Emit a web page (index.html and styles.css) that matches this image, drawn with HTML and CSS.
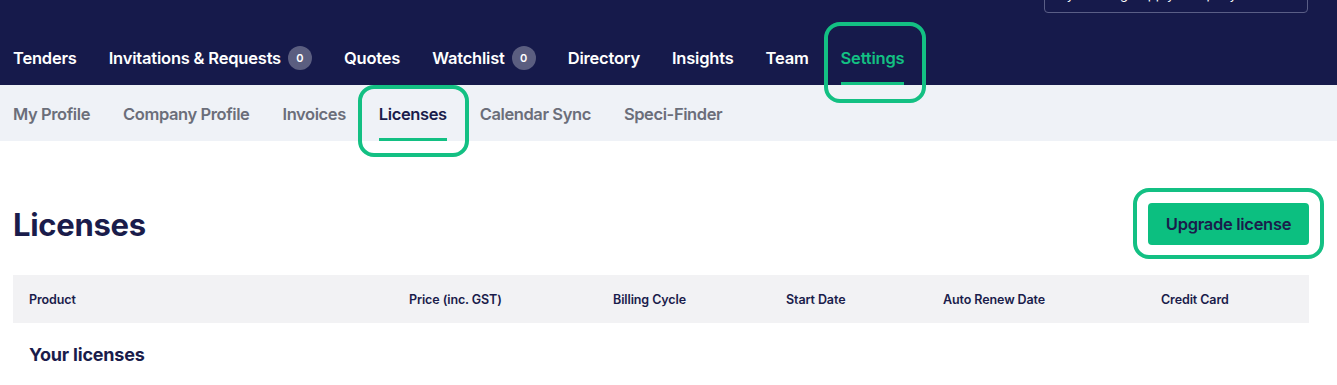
FILE: index.html
```html
<!DOCTYPE html>
<html lang="en">
  <head>
    <meta charset="UTF-8" />
    <title>Licenses</title>
    <link rel="stylesheet" href="styles.css">
  </head>
  <body>
    <header class="topbar">
      <div class="account-row">
        <div class="account">My Flooring Supply Company</div>
      </div>
      <nav class="mainnav">
        <a class="nav-link">Tenders</a>
        <a class="nav-link">Invitations &amp; Requests <span class="badge">0</span></a>
        <a class="nav-link">Quotes</a>
        <a class="nav-link">Watchlist <span class="badge">0</span></a>
        <a class="nav-link">Directory</a>
        <a class="nav-link">Insights</a>
        <a class="nav-link">Team</a>
        <a class="nav-link active">Settings<span class="mark mark-settings"></span></a>
      </nav>
    </header>

    <nav class="subnav">
      <a class="sub-link">My Profile</a>
      <a class="sub-link">Company Profile</a>
      <a class="sub-link">Invoices</a>
      <a class="sub-link active">Licenses<span class="mark mark-licenses"></span></a>
      <a class="sub-link">Calendar Sync</a>
      <a class="sub-link">Speci-Finder</a>
    </nav>

    <main class="content">
      <div class="title-row">
        <h1>Licenses</h1>
        <button type="button" class="btn-upgrade">Upgrade license<span class="mark mark-upgrade"></span></button>
      </div>

      <table class="licenses">
        <thead>
          <tr>
            <th class="col-product">Product</th>
            <th class="col-price">Price (inc. GST)</th>
            <th class="col-cycle">Billing Cycle</th>
            <th class="col-start">Start Date</th>
            <th class="col-renew">Auto Renew Date</th>
            <th class="col-card">Credit Card</th>
          </tr>
        </thead>
      </table>

      <h2>Your licenses</h2>
    </main>
  </body>
</html>
```

FILE: styles.css
```css
* {
  box-sizing: border-box;
  padding: 0;
  margin: 0;
}

body {
  font-family: "Inter", "Liberation Sans", sans-serif;
  background: #fff;
  color: #1a1c4b;
  overflow: hidden;
}

a {
  text-decoration: none;
}

/* top bar */

.topbar {
  background: #161a4b;
  height: 85px;
  display: flex;
  flex-direction: column;
}

.account-row {
  height: 29px;
  display: flex;
  justify-content: flex-end;
  padding-right: 29px;
}

.account {
  width: 264px;
  height: 34px;
  margin-top: -21px;
  border: 1px solid #5a5e86;
  border-radius: 4px;
  color: #fff;
  font-size: 13px;
  padding: 6px 10px;
}

.mainnav {
  flex: 1;
  display: flex;
  gap: 32px;
  padding-left: 13px;
}

.nav-link {
  position: relative;
  display: flex;
  align-items: center;
  gap: 7px;
  padding-top: 4px;
  color: #fff;
  font-size: 16.5px;
  font-weight: 600;
  letter-spacing: -0.2px;
  border-bottom: 3px solid transparent;
}

.nav-link.active {
  color: #13c083;
  border-bottom-color: #13c083;
}

.badge {
  display: inline-flex;
  align-items: center;
  justify-content: center;
  width: 24px;
  height: 24px;
  border-radius: 50%;
  background: #5b5e80;
  color: #fff;
  font-size: 11px;
  font-weight: 600;
  letter-spacing: 0;
}

/* sub nav */

.subnav {
  background: #eff2f7;
  height: 56px;
  display: flex;
  gap: 33px;
  padding-left: 13px;
}

.sub-link {
  position: relative;
  display: flex;
  align-items: center;
  padding-top: 4px;
  color: #6b6e7a;
  font-size: 16.5px;
  font-weight: 600;
  letter-spacing: -0.4px;
  border-bottom: 3px solid transparent;
}

.sub-link.active {
  color: #1a1c4b;
  border-bottom-color: #13c083;
}

/* highlight rings */

.mark {
  position: absolute;
  border: 4px solid #13c083;
  border-radius: 16px;
  pointer-events: none;
}

.mark-settings {
  left: -17px;
  right: -22px;
  top: -7px;
  bottom: -21px;
}

.mark-licenses {
  left: -21px;
  right: -22px;
  top: 0;
  bottom: -19px;
}

.mark-upgrade {
  left: -15px;
  right: -15px;
  top: -15px;
  bottom: -14px;
}

/* content */

.content {
  padding: 0 28px 0 13px;
}

.title-row {
  display: flex;
  justify-content: space-between;
  align-items: center;
  margin-top: 62px;
}

h1 {
  font-size: 31px;
  font-weight: 700;
  letter-spacing: -0.3px;
}

.btn-upgrade {
  position: relative;
  width: 161px;
  height: 42px;
  border: none;
  border-radius: 4px;
  background: #0cbf80;
  color: #1a1c4b;
  font-family: inherit;
  font-size: 16.5px;
  font-weight: 600;
  letter-spacing: -0.3px;
}

.licenses {
  width: 100%;
  margin-top: 30px;
  border-collapse: collapse;
}

.licenses th {
  background: #f2f2f4;
  height: 48px;
  text-align: left;
  font-size: 12.5px;
  font-weight: 600;
  letter-spacing: -0.1px;
  color: #1a1c4b;
}

.col-product {
  padding-left: 16px;
  width: 396px;
}

.col-price {
  width: 204px;
}

.col-cycle {
  width: 173px;
}

.col-start {
  width: 157px;
}

.col-renew {
  width: 218px;
}

h2 {
  font-size: 18px;
  font-weight: 700;
  letter-spacing: -0.2px;
  padding: 21px 0 0 16px;
}
```
